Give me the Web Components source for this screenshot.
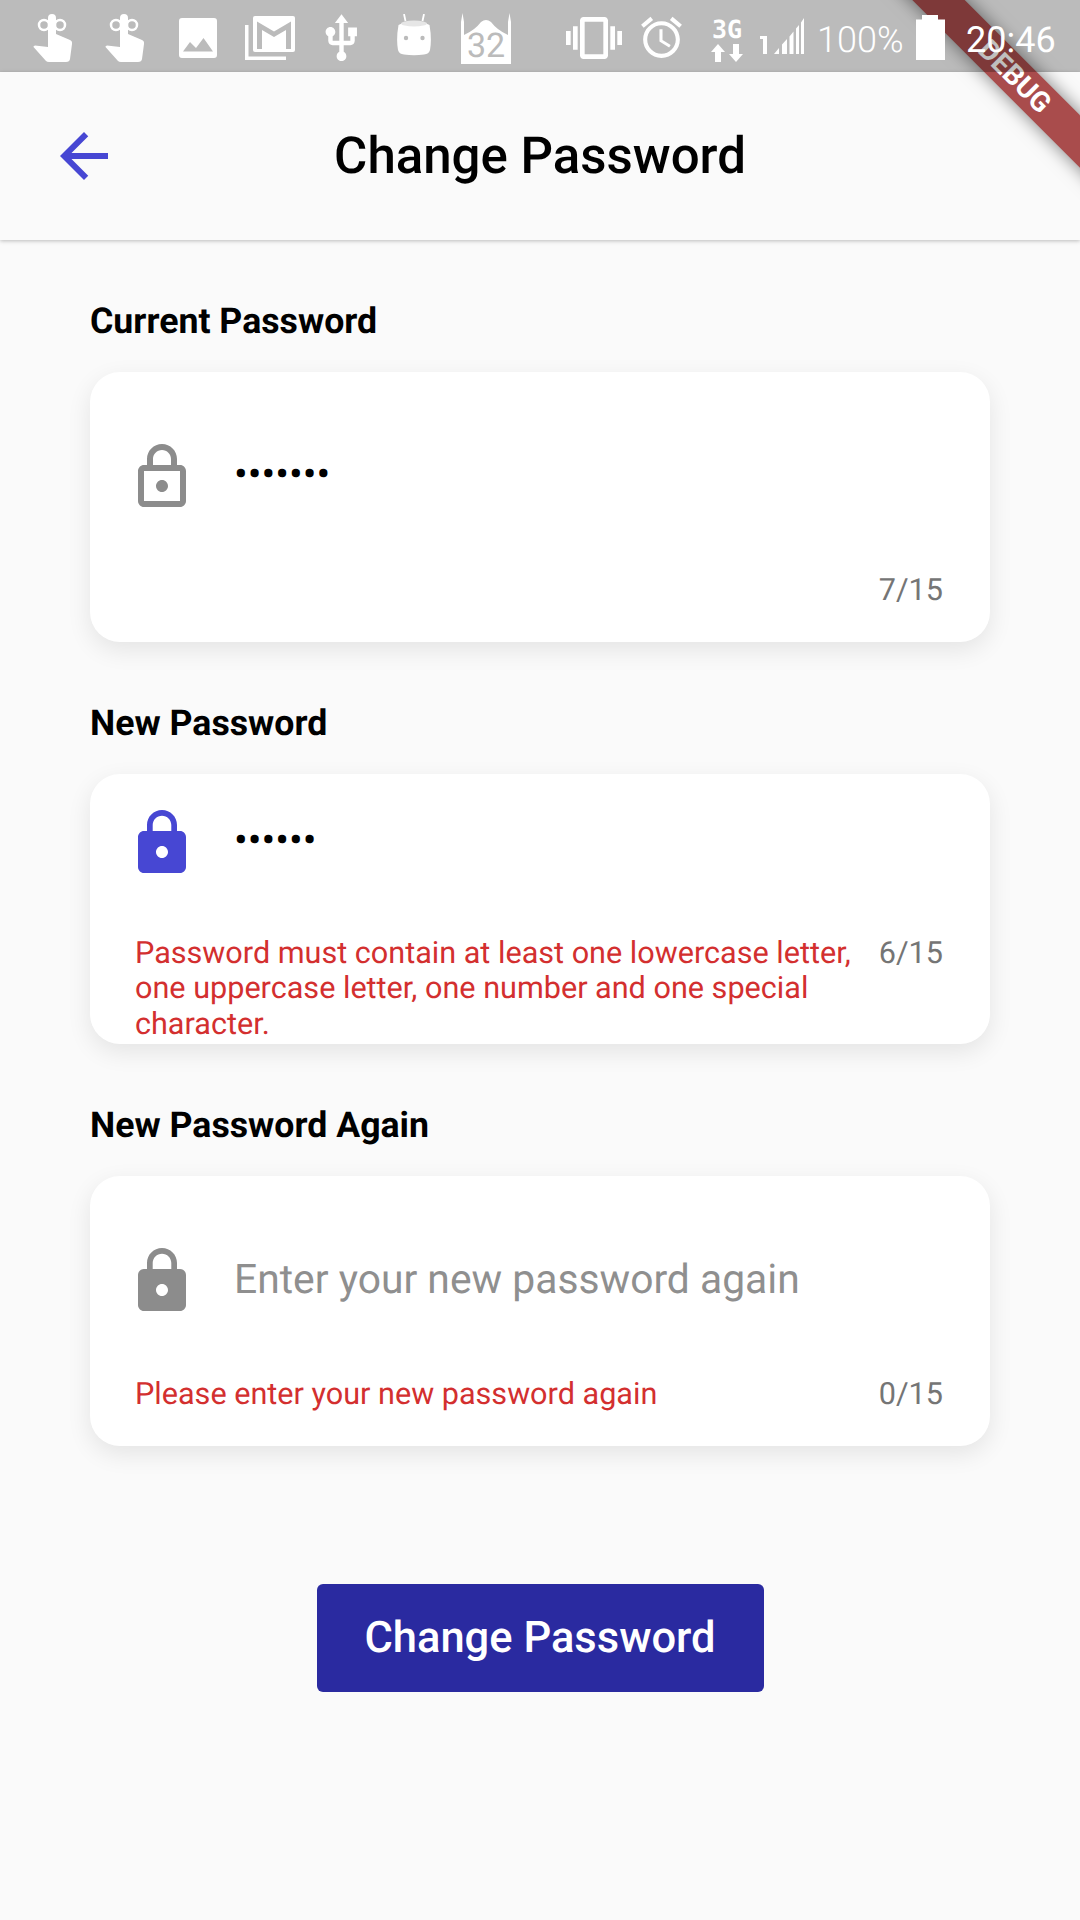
<!DOCTYPE html>
<html>
<head>
<meta charset="utf-8">
<title>Change Password</title>
<style>
  html, body { margin: 0; padding: 0; background: #fafafa; }
  body { width: 1080px; height: 1920px; overflow: hidden; position: relative; font-family: Roboto, sans-serif; text-rendering: geometricPrecision; }
</style>
</head>
<body>
<status-bar></status-bar>
<debug-banner></debug-banner>
<app-bar>Change Password</app-bar>
<form-page>
  <password-field label="Current Password" counter="7/15" icon="outline">•••••••</password-field>
  <password-field label="New Password" counter="6/15" icon="filled" focused multiline>••••••
    <span slot="error">Password must contain at least one lowercase letter, one uppercase letter, one number and one special character.</span>
  </password-field>
  <password-field label="New Password Again" counter="0/15" icon="filled" placeholder="Enter your new password again">
    <span slot="error">Please enter your new password again</span>
  </password-field>
  <primary-button>Change Password</primary-button>
</form-page>

<script>
const statusTemplate = document.createElement('template');
statusTemplate.innerHTML = `
  <style>
    :host {
      display: flex;
      position: relative;
      z-index: 3;
      height: 72px;
      padding-left: 33px;
      box-sizing: border-box;
      align-items: flex-start;
      background: rgba(0, 0, 0, 0.25);
      color: #fff;
      font-family: Roboto, sans-serif;
    }
    svg { display: block; flex: none; fill: #fff; }
    .pct { font-size: 36px; font-weight: 300; line-height: 36px; margin: 22px 0 0 13px; width: 87px; white-space: nowrap; }
    .time { font-size: 36px; line-height: 36px; margin: 22px 0 0 21px; white-space: nowrap; }
    .cal { position: relative; flex: none; width: 50px; height: 52px; margin: 12px 0 0 30px; }
    .cal span { position: absolute; left: 0; right: 0; bottom: 3px; text-align: center; color: #bbb; font-size: 34px; line-height: 30px; }
    .net { position: relative; flex: none; width: 32px; height: 44px; margin: 19px 0 0 25px; }
    .net span { display: block; text-align: center; font: 700 25px/22px "DejaVu Sans Mono", monospace; }
  </style>
  <!-- tap indicators -->
  <svg width="40" height="49" viewBox="0 0 40 49" style="margin-top:14px">
    <path d="M15 4a4 4 0 0 1 8 0V20L37 26Q39.500 27 39 30L37 45Q36.600 48 33 48H16Q14 48 13 47L.5 33Q0 32 2 31.500L15 33Z"/>
    <circle cx="11" cy="11" r="5" fill="none" stroke="#fff" stroke-width="2.500"/>
    <circle cx="27" cy="11" r="5" fill="none" stroke="#fff" stroke-width="2.500"/>
  </svg>
  <svg width="40" height="49" viewBox="0 0 40 49" style="margin:14px 0 0 32px">
    <path d="M15 4a4 4 0 0 1 8 0V20L37 26Q39.500 27 39 30L37 45Q36.600 48 33 48H16Q14 48 13 47L.5 33Q0 32 2 31.500L15 33Z"/>
    <circle cx="11" cy="11" r="5" fill="none" stroke="#fff" stroke-width="2.500"/>
    <circle cx="27" cy="11" r="5" fill="none" stroke="#fff" stroke-width="2.500"/>
  </svg>
  <!-- image -->
  <svg width="38" height="40" viewBox="0 0 38 40" style="margin:18px 0 0 34px">
    <path fill-rule="evenodd" d="M3 0H35Q38 0 38 3V37Q38 40 35 40H3Q0 40 0 37V3Q0 0 3 0ZM4 33.500H34L24.500 20L17 30L11 24Z"/>
  </svg>
  <!-- stacked mail -->
  <svg width="50" height="44" viewBox="0 0 50 44" style="margin:16px 0 0 28px">
    <path d="M0 9H3.500V40.500H41V44H0Z"/>
    <path d="M10 0H48Q50 0 50 2V34Q50 36 48 36H10Q8 36 8 34V2Q8 0 10 0Z"/>
    <path d="M12 33V5.500L29 15.500L46 5.500V33H41V14L29 21L17 14V33Z" fill="#bbb"/>
  </svg>
  <!-- usb -->
  <svg width="53" height="53" viewBox="0 0 24 24" style="margin:12px 0 0 20px">
    <path d="M15 7v4h1v2h-3V5h2l-3-4-3 4h2v8H8v-2.070c.7-.37 1.200-1.080 1.200-1.930 0-1.210-.99-2.200-2.200-2.200-1.210 0-2.200.99-2.200 2.200 0 .85.5 1.560 1.200 1.930V13c0 1.110.89 2 2 2h3v3.050c-.71.37-1.200 1.100-1.200 1.950 0 1.220.99 2.200 2.200 2.200 1.210 0 2.200-.98 2.200-2.200 0-.85-.49-1.580-1.200-1.950V15h3c1.110 0 2-.89 2-2v-2h1V7h-4z"/>
  </svg>
  <!-- android head -->
  <svg width="34" height="42" viewBox="0 0 34 42" style="margin:14px 0 0 29px">
    <path d="M7 0L8.500 7M27 0L25.500 7" stroke="#fff" stroke-width="1.800" fill="none"/>
    <path d="M1.500 11Q17 3 32.500 11Q35 25 33 36Q32 40 27 40.500Q17 42 7 40.500Q2 40 1 36Q-1 25 1.500 11Z"/>
    <ellipse cx="17" cy="9.500" rx="13" ry="3" fill="#e6e6e6"/>
    <circle cx="9" cy="24" r="2.200" fill="#bbb"/>
    <circle cx="25.500" cy="24" r="2.200" fill="#bbb"/>
  </svg>
  <!-- calendar -->
  <div class="cal">
    <svg width="50" height="52" viewBox="0 0 50 52">
      <path d="M0 52V10L1.500 1L3 10V23Q14 18 20 10Q25 6 30 10Q36 18 47 23V10L48.500 1L50 10V52Z"/>
    </svg>
    <span>32</span>
  </div>
  <!-- vibrate -->
  <svg width="56" height="56" viewBox="0 0 24 24" style="margin:10px 0 0 55px">
    <path d="M0 15h2V9H0v6zm3 2h2V7H3v10zm19-8v6h2V9h-2zm-3 8h2V7h-2v10zM16.500 3h-9C6.670 3 6 3.670 6 4.500v15c0 .83.67 1.500 1.500 1.500h9c.83 0 1.500-.67 1.500-1.500v-15c0-.83-.67-1.500-1.500-1.500zM16 19H8V5h8v14z"/>
  </svg>
  <!-- alarm -->
  <svg width="49" height="49" viewBox="0 0 24 24" style="margin:13px 0 0 15px">
    <path d="M22 5.720l-4.600-3.860-1.290 1.530 4.600 3.860L22 5.720zM7.880 3.390L6.600 1.860 2 5.710l1.290 1.530 4.590-3.850zM12.500 8H11v6l4.750 2.850.75-1.230-4-2.370V8zM12 4c-4.970 0-9 4.030-9 9s4.020 9 9 9c4.970 0 9-4.030 9-9s-4.030-9-9-9zm0 16c-3.870 0-7-3.130-7-7s3.130-7 7-7 7 3.130 7 7-3.130 7-7 7z"/>
  </svg>
  <!-- 3G with data arrows -->
  <div class="net">
    <span>3G</span>
    <svg width="32" height="20" viewBox="0 0 32 20" style="margin-top:3px">
      <path d="M7 0L14 8H10V18H4V8H0Z"/>
      <path d="M25 18L18 10H22V0H28V10H32Z"/>
    </svg>
  </div>
  <!-- signal -->
  <svg width="44" height="36" viewBox="0 0 44 36" style="margin:18px 0 0 17px">
    <path d="M0 18H7V36H3V21H0Z"/>
    <path d="M14 36L19 30V36ZM22 26.500L27 21V36H22ZM29.500 18.500L33.500 13.500V36H29.500ZM36 10.500L39 7V36H36ZM41 4.500L44 0V36H41Z"/>
  </svg>
  <span class="pct">100%</span>
  <!-- battery -->
  <svg width="29" height="45" viewBox="0 0 29 45" style="margin:15px 0 0 12px">
    <path d="M6 0H22V4.500H29V45H0V4.500H6Z"/>
  </svg>
  <span class="time">20:46</span>
`;

class StatusBar extends HTMLElement {
  constructor() {
    super();
    this.attachShadow({ mode: 'open' }).appendChild(statusTemplate.content.cloneNode(true));
  }
}
customElements.define('status-bar', StatusBar);

const bannerTemplate = document.createElement('template');
bannerTemplate.innerHTML = `
  <style>
    :host {
      display: block;
      position: absolute;
      top: 0;
      right: 0;
      width: 300px;
      height: 300px;
      overflow: hidden;
      z-index: 2;
      pointer-events: none;
    }
    .band {
      position: absolute;
      left: 55px;
      top: 58px;
      width: 360px;
      height: 37px;
      transform: rotate(45deg);
      background: rgb(169, 76, 76);
      box-shadow: 0 0 18px rgba(0, 0, 0, 0.5);
      color: #fff;
      font: 700 28px/37px Roboto, sans-serif;
      text-align: center;
    }
  </style>
  <div class="band">DEBUG</div>
`;

class DebugBanner extends HTMLElement {
  constructor() {
    super();
    this.attachShadow({ mode: 'open' }).appendChild(bannerTemplate.content.cloneNode(true));
  }
}
customElements.define('debug-banner', DebugBanner);

const appBarTemplate = document.createElement('template');
appBarTemplate.innerHTML = `
  <style>
    :host {
      display: grid;
      grid-template-columns: 144px 1fr 144px;
      align-items: center;
      height: 168px;
      position: relative;
      z-index: 1;
      background: #fafafa;
      box-shadow: 0 1px 4px rgba(0, 0, 0, 0.25);
    }
    svg { display: block; margin-left: 48px; fill: #4747d3; }
    .title {
      text-align: center;
      color: #000;
      padding-top: 2px;
      font: 500 51px/60px Roboto, sans-serif;
    }
  </style>
  <svg width="72" height="72" viewBox="0 0 24 24"><path d="M20 11H7.830l5.590-5.590L12 4l-8 8 8 8 1.410-1.410L7.830 13H20v-2z"/></svg>
  <div class="title"><slot></slot></div>
`;

class AppBar extends HTMLElement {
  constructor() {
    super();
    this.attachShadow({ mode: 'open' }).appendChild(appBarTemplate.content.cloneNode(true));
  }
}
customElements.define('app-bar', AppBar);

const pageTemplate = document.createElement('template');
pageTemplate.innerHTML = `
  <style>
    :host {
      display: flex;
      flex-direction: column;
      gap: 57px;
      padding: 57px 90px 0;
    }
  </style>
  <slot></slot>
`;

class FormPage extends HTMLElement {
  constructor() {
    super();
    this.attachShadow({ mode: 'open' }).appendChild(pageTemplate.content.cloneNode(true));
  }
}
customElements.define('form-page', FormPage);

const LOCK_PATHS = {
  outline: 'M18 8h-1V6c0-2.760-2.240-5-5-5S7 3.240 7 6v2H6c-1.100 0-2 .9-2 2v10c0 1.100.9 2 2 2h12c1.100 0 2-.9 2-2V10c0-1.100-.9-2-2-2zM9 6c0-1.660 1.340-3 3-3s3 1.340 3 3v2H9V6zm9 14H6V10h12v10zm-6-3c1.100 0 2-.9 2-2s-.9-2-2-2-2 .9-2 2 .9 2 2 2z',
  filled: 'M18 8h-1V6c0-2.760-2.240-5-5-5S7 3.240 7 6v2H6c-1.100 0-2 .9-2 2v10c0 1.100.9 2 2 2h12c1.100 0 2-.9 2-2V10c0-1.100-.9-2-2-2zm-6 9c-1.100 0-2-.9-2-2s.9-2 2-2 2 .9 2 2-.9 2-2 2zm3.100-9H8.900V6c0-1.710 1.390-3.100 3.100-3.100 1.710 0 3.100 1.390 3.100 3.100v2z'
};

const fieldTemplate = document.createElement('template');
fieldTemplate.innerHTML = `
  <style>
    :host {
      display: block;
      font-family: Roboto, sans-serif;
    }
    .label {
      font-size: 35.7px;
      font-weight: 700;
      line-height: 48px;
      color: #000;
      margin-bottom: 27px;
    }
    .card {
      height: 270px;
      box-sizing: border-box;
      background: #fff;
      border-radius: 30px;
      box-shadow: 0 8px 24px rgba(0, 0, 0, 0.09);
      overflow: hidden;
      display: flex;
      flex-direction: column;
      justify-content: center;
    }
    .inner { flex: none; padding-top: 34px; }
    .row { display: flex; padding-left: 36px; height: 72px; }
    svg { display: block; flex: none; fill: #8c8c8c; }
    :host([focused]) svg { fill: #4747d3; }
    .input {
      margin-left: 36px;
      font-size: 40.8px;
      line-height: 66px;
      height: 66px;
      color: #000;
    }
    .input.hint { color: #8f8f8f; line-height: 68px; }
    .helper {
      display: flex;
      justify-content: space-between;
      margin: 60px 0 -2px;
      padding: 0 47px 0 45px;
      font-size: 30.6px;
      line-height: 35.5px;
    }
    :host([multiline]) .helper { margin: 57px 0 0; padding-bottom: 3px; }
    .error { flex: 1; margin-right: 20px; color: #d32f2f; }
    .count { flex: none; color: #757575; }
  </style>
  <div class="label"></div>
  <div class="card">
    <div class="inner">
      <div class="row">
        <svg width="72" height="72" viewBox="0 0 24 24"><path></path></svg>
        <div class="input"><slot></slot></div>
      </div>
      <div class="helper">
        <div class="error"><slot name="error"></slot></div>
        <div class="count"></div>
      </div>
    </div>
  </div>
`;

class PasswordField extends HTMLElement {
  constructor() {
    super();
    this._shadowRoot = this.attachShadow({ mode: 'open' });
    this._shadowRoot.appendChild(fieldTemplate.content.cloneNode(true));
  }

  connectedCallback() {
    this._shadowRoot.querySelector('.label').textContent = this.getAttribute('label');
    this._shadowRoot.querySelector('.count').textContent = this.getAttribute('counter');
    this._shadowRoot.querySelector('path').setAttribute('d', LOCK_PATHS[this.getAttribute('icon')]);
    const input = this._shadowRoot.querySelector('.input');
    if (this.hasAttribute('placeholder')) {
      input.classList.add('hint');
      input.textContent = this.getAttribute('placeholder');
    }
  }
}
customElements.define('password-field', PasswordField);

const buttonTemplate = document.createElement('template');
buttonTemplate.innerHTML = `
  <style>
    :host {
      display: flex;
      align-self: center;
      align-items: center;
      justify-content: center;
      width: 447px;
      height: 108px;
      margin-top: 81px;
      background: #2a2aa0;
      border-radius: 6px;
      color: #fff;
      font: 500 43.5px/48px Roboto, sans-serif;
    }
  </style>
  <slot></slot>
`;

class PrimaryButton extends HTMLElement {
  constructor() {
    super();
    this.attachShadow({ mode: 'open' }).appendChild(buttonTemplate.content.cloneNode(true));
  }
}
customElements.define('primary-button', PrimaryButton);
</script>
</body>
</html>
